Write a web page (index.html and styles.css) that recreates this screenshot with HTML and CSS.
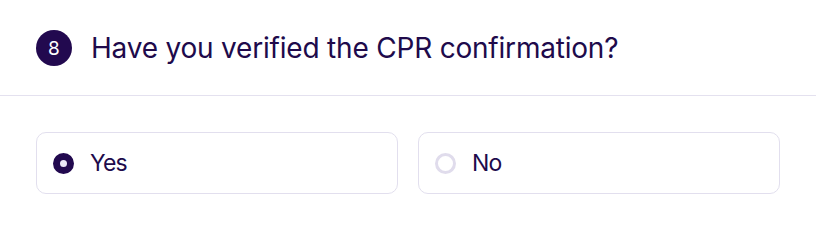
FILE: index.html
```html
<!DOCTYPE html>
<html lang="en">

<head>
    <meta charset="UTF-8">
    <meta name="viewport" content="width=device-width, initial-scale=1.0">
    <title>Question 8</title>
    <link rel="stylesheet" href="styles.css">
</head>

<body>
    <div class="question">
        <div class="question-header">
            <span class="question-number">8</span>
            <h2>Have you verified the CPR confirmation?</h2>
        </div>
        <div class="question-options">
            <label class="option">
                <input type="radio" name="cpr-verified" value="yes" checked>
                <span class="radio-mark"></span>
                Yes
            </label>
            <label class="option">
                <input type="radio" name="cpr-verified" value="no">
                <span class="radio-mark"></span>
                No
            </label>
        </div>
    </div>
</body>

</html>
```

FILE: styles.css
```css
body {
    margin: 0;
    font-family: Inter, "Noto Sans", sans-serif;
    background-color: white;
    color: #200a4b;
}

.question-header {
    display: flex;
    align-items: center;
    gap: 19px;
    padding: 30px 36px 29px;
    border-bottom: 1px solid #e4e1ef;
}

.question-number {
    display: flex;
    justify-content: center;
    align-items: center;
    width: 36px;
    height: 36px;
    border-radius: 50%;
    background-color: #22094f;
    color: white;
    font-size: 19px;
}

.question-header h2 {
    margin: 0;
    font-size: 28px;
    font-weight: 400;
    letter-spacing: -0.2px;
}

.question-options {
    display: grid;
    grid-template-columns: 1fr 1fr;
    gap: 20px;
    padding: 36px 36px 0;
}

.option {
    display: flex;
    align-items: center;
    gap: 16px;
    height: 62px;
    box-sizing: border-box;
    padding: 0 16px;
    border: 1.5px solid #e2dfee;
    border-radius: 10px;
    font-size: 23px;
    letter-spacing: -0.9px;
    cursor: pointer;
}

/* native radio hidden, custom circle below */
.option input {
    display: none;
}

.radio-mark {
    width: 21px;
    height: 21px;
    box-sizing: border-box;
    border-radius: 50%;
    border: 3px solid #e0dcec;
    background-color: white;
}

.option input:checked + .radio-mark {
    border: 7px solid #22094f;
    background-color: #ece8f8;
}
```
